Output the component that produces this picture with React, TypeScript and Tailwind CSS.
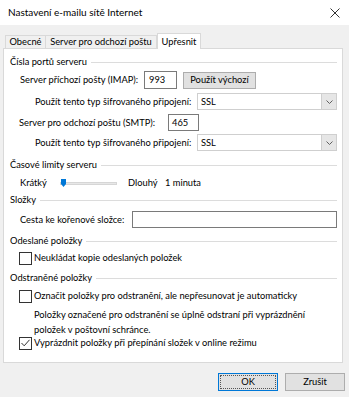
import React from "react";

const Header: React.FC<{ title: string; className?: string }> = ({ title, className }) => (
    <div className={"flex items-center h-[16px] " + (className ?? "")}>
        <span className="whitespace-nowrap">{title}</span>
        <div className="flex-1 h-px bg-[#dcdcdc] ml-[4px] mr-[5px]" />
    </div>
);

const SelectBox: React.FC<{ value: string }> = ({ value }) => (
    <div className="flex shrink-0 w-[140px] h-[17px] border border-[#cfcfcf] bg-white">
        <span className="flex-1 flex items-center pl-[3px]">{value}</span>
        <span className="w-[15px] h-full flex items-center justify-center bg-[#e6e6e6] border-l border-[#cfcfcf]">
            <svg width="7" height="4" viewBox="0 0 7 4">
                <polyline points="0.5,0.5 3.5,3.5 6.5,0.5" fill="none" stroke="#606060" strokeWidth="1" />
            </svg>
        </span>
    </div>
);

const Checkbox: React.FC<{ label: string; checked?: boolean; className?: string }> = ({ label, checked, className }) => (
    <div className={"flex items-center h-[16px] pl-[9px] " + (className ?? "")}>
        <span className="w-[13px] h-[13px] shrink-0 border border-[#333333] bg-white flex items-center justify-center">
            {checked && (
                <svg width="9" height="8" viewBox="0 0 9 8">
                    <polyline points="0.5,4 3.2,6.8 8.5,0.8" fill="none" stroke="#333333" strokeWidth="1" />
                </svg>
            )}
        </span>
        <span className="ml-[2px] whitespace-nowrap">{label}</span>
    </div>
);

export default function App() {
    return (
        <div className="w-[349px] h-[397px] bg-[#f0f0f0] flex flex-col overflow-hidden text-black text-[9.3px] font-['Lato',sans-serif]">
            <div className="h-[25px] shrink-0 bg-white flex items-center justify-between pl-[8px] pr-[9px]">
                <span className="text-[10px] whitespace-nowrap">Nastavení e-mailu sítě Internet</span>
                <svg width="10" height="10" viewBox="0 0 10 10">
                    <path d="M0.5 0.5 L9.5 9.5 M9.5 0.5 L0.5 9.5" stroke="#333333" strokeWidth="1" />
                </svg>
            </div>

            <div className="h-[23px] shrink-0 flex items-end pl-[5px] whitespace-nowrap">
                <div className="w-[41px] h-[13px] flex items-center justify-center border border-b-0 border-[#d9d9d9] bg-[#f0f0f0]">Obecné</div>
                <div className="w-[111px] h-[13px] flex items-center justify-center border border-l-0 border-b-0 border-[#d9d9d9] bg-[#f0f0f0]">Server pro odchozí poštu</div>
                <div className="relative z-10 -mb-px w-[44px] h-[16px] flex items-center justify-center border border-b-0 border-[#d9d9d9] bg-white">Upřesnit</div>
            </div>

            <div className="ml-[3px] w-[340px] h-[315px] shrink-0 bg-white border border-[#d9d9d9] pl-[6px] flex flex-col whitespace-nowrap">
                <Header title="Čísla portů serveru" className="mt-[5px]" />
                <div className="flex items-center h-[18px] mt-[1px] pl-[10px]">
                    <span className="w-[124px] shrink-0">Server příchozí pošty (IMAP):</span>
                    <span className="w-[33px] h-[18px] border border-[#7a7a7a] flex items-center pl-[4px]">993</span>
                    <span className="ml-[6px] w-[73px] h-[17px] border border-[#adadad] bg-[#e1e1e1] flex items-center justify-center">Použít výchozí</span>
                </div>
                <div className="flex items-center h-[17px] mt-[4px] pl-[25px]">
                    <span className="w-[162px] shrink-0">Použít tento typ šifrovaného připojení:</span>
                    <SelectBox value="SSL" />
                </div>
                <div className="flex items-center h-[17px] mt-[4px] pl-[9px]">
                    <span className="w-[149px] shrink-0">Server pro odchozí poštu (SMTP):</span>
                    <span className="w-[31px] h-[17px] border border-[#7a7a7a] flex items-center pl-[3px]">465</span>
                </div>
                <div className="flex items-center h-[17px] mt-[3px] pl-[25px]">
                    <span className="w-[162px] shrink-0">Použít tento typ šifrovaného připojení:</span>
                    <SelectBox value="SSL" />
                </div>

                <Header title="Časové limity serveru" className="mt-[6px]" />
                <div className="flex items-center h-[16px] mt-[2px] pl-[10px]">
                    <span className="w-[40px]">Krátký</span>
                    <div className="relative w-[57px] h-[3px] bg-[#e7e7e7] border border-[#d6d6d6]">
                        <svg className="absolute left-0 -top-[4px]" width="5" height="8" viewBox="0 0 5 8">
                            <path d="M0 0 H5 V5 L2.5 8 L0 5 Z" fill="#0078d7" />
                        </svg>
                    </div>
                    <span className="ml-[11px] w-[37px]">Dlouhý</span>
                    <span>1 minuta</span>
                </div>

                <Header title="Složky" className="mt-[1px]" />
                <div className="flex items-center h-[17px] mt-[3px] pl-[10px]">
                    <span className="w-[112px] shrink-0">Cesta ke kořenové složce:</span>
                    <span className="w-[205px] h-[17px] border border-[#7a7a7a]" />
                </div>

                <Header title="Odeslané položky" className="mt-[5px]" />
                <Checkbox label="Neukládat kopie odeslaných položek" className="mt-[1px]" />

                <Header title="Odstraněné položky" className="mt-[4px]" />
                <Checkbox label="Označit položky pro odstranění, ale nepřesunovat je automaticky" className="mt-[2px]" />
                <p className="mt-[3px] pl-[24px] leading-[15px]">
                    Položky označené pro odstranění se úplně odstraní při vyprázdnění
                    <br />
                    položek v poštovní schránce.
                </p>
                <Checkbox label="Vyprázdnit položky při přepínání složek v online režimu" checked className="-mt-[2px]" />
            </div>

            <div className="flex justify-end gap-[7px] pr-[4px] mt-[10px]">
                <div className="w-[60px] h-[18px] border border-[#0078d7] bg-[#e1e1e1] flex items-center justify-center">
                    <span className="w-[56px] h-[14px] border border-dotted border-[#555555] flex items-center justify-center">OK</span>
                </div>
                <div className="w-[60px] h-[18px] border border-[#adadad] bg-[#e1e1e1] flex items-center justify-center">Zrušit</div>
            </div>
        </div>
    );
}
